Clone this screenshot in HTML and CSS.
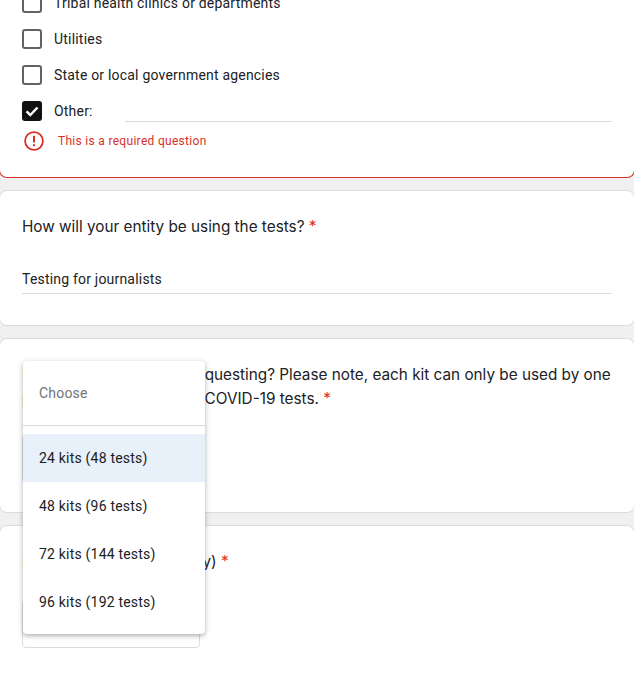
FILE: index.html
```html
<!DOCTYPE html>
<html lang="en">
<head>
<meta charset="utf-8">
<title>Test kit request form</title>
<link rel="stylesheet" href="styles.css">
</head>
<body>
<main class="form">
  <section class="card card-error">
    <ul class="options">
      <li class="option"><span class="box"></span><span>Tribal health clinics or departments</span></li>
      <li class="option"><span class="box"></span><span>Utilities</span></li>
      <li class="option"><span class="box"></span><span>State or local government agencies</span></li>
      <li class="option">
        <span class="box box-checked"><svg viewBox="0 0 20 20" width="20" height="20"><path d="M4.6 10.4l3.7 3.7 7.2-7.6" fill="none" stroke="#fff" stroke-width="2.4"/></svg></span>
        <span>Other:</span>
        <span class="other-line"></span>
      </li>
    </ul>
    <div class="error">
      <svg class="error-icon" viewBox="0 0 20 20" width="20" height="20"><circle cx="10" cy="10" r="8.9" fill="none" stroke="#d93025" stroke-width="1.8"/><path d="M10 4.8v6.6M10 13.2v2" fill="none" stroke="#d93025" stroke-width="2"/></svg>
      <span>This is a required question</span>
    </div>
  </section>

  <section class="card card-use">
    <h2 class="question">How will your entity be using the tests? <span class="star">*</span></h2>
    <div class="answer">Testing for journalists</div>
  </section>

  <section class="card card-kits">
    <h2 class="question">How many kits are you requesting? Please note, each kit can only be used by one person and contains two COVID-19 tests. <span class="star">*</span></h2>
    <div class="select"></div>
  </section>

  <section class="card card-date">
    <h2 class="question">Requested kit (by quantity) <span class="star">*</span></h2>
    <div class="select"></div>
  </section>
</main>

<div class="menu">
  <div class="menu-item menu-placeholder">Choose</div>
  <div class="menu-divider"></div>
  <div class="menu-item menu-active">24 kits (48 tests)</div>
  <div class="menu-item">48 kits (96 tests)</div>
  <div class="menu-item">72 kits (144 tests)</div>
  <div class="menu-item">96 kits (192 tests)</div>
</div>
</body>
</html>
```
FILE: styles.css
```css
html, body {
  margin: 0;
  height: 100%;
  overflow: hidden;
  background: #f0f0f0;
}
body {
  font-family: Roboto, "Liberation Sans", sans-serif;
  color: #202124;
}
.form {
  display: flex;
  flex-direction: column;
  gap: 12px;
  margin: -15px -1px 0;
}
.card {
  background: #fff;
  border: 1px solid #dadce0;
  border-radius: 8px;
  padding: 0 22px;
  box-sizing: border-box;
}
.card-error {
  height: 193px;
  border-color: #d93025;
  border-top: 0;
}
.card-use {
  height: 136px;
  padding-top: 24px;
}
.card-kits {
  height: 175px;
  padding-top: 24px;
}
.card-date {
  height: 200px;
  padding-top: 24px;
}
.options {
  list-style: none;
  margin: 0;
  padding: 0;
}
.option {
  display: flex;
  align-items: center;
  gap: 12px;
  height: 36px;
  font-size: 14px;
  letter-spacing: .2px;
}
.box {
  flex: none;
  width: 20px;
  height: 20px;
  box-sizing: border-box;
  border: 2px solid #5f6368;
  border-radius: 3px;
}
.box-checked {
  border: 0;
  background: #111;
  display: block;
}
.box-checked svg { display: block; }
.other-line {
  flex: 1;
  align-self: flex-end;
  height: 1px;
  margin: 0 0 7px 20px;
  background: #dadce0;
}
.error {
  display: flex;
  align-items: center;
  gap: 14px;
  margin: 2px 0 0 2px;
  font-size: 12px;
  letter-spacing: .3px;
  color: #d93025;
}
.error-icon { flex: none; }
.question {
  margin: 0;
  font-family: Inter, Roboto, sans-serif;
  font-weight: 400;
  font-size: 15.3px;
  line-height: 24px;
  letter-spacing: 0;
}
.star { color: #d93025; }
.answer {
  margin-top: 30px;
  padding-bottom: 4px;
  border-bottom: 1px solid #dadce0;
  font-size: 14px;
  line-height: 20px;
  letter-spacing: .2px;
}
.select {
  width: 178px;
  height: 48px;
  box-sizing: border-box;
  border: 1px solid #dadce0;
  border-radius: 4px;
  margin-top: 23px;
}
.card-date .select { margin-top: 26px; }
.menu {
  position: absolute;
  left: 23px;
  top: 361px;
  width: 182px;
  height: 273px;
  box-sizing: border-box;
  padding: 8px 0;
  background: #fff;
  border-radius: 4px;
  box-shadow: 0 2px 4px rgba(60, 64, 67, .3), 0 1px 6px rgba(60, 64, 67, .15);
}
.menu-item {
  height: 48px;
  display: flex;
  align-items: center;
  padding: 0 16px;
  font-size: 14px;
  letter-spacing: .2px;
}
.menu-placeholder { color: #70757a; }
.menu-divider {
  height: 1px;
  background: #dadce0;
  margin: 8px 0;
}
.menu-active { background: #e8f0fa; }
```
